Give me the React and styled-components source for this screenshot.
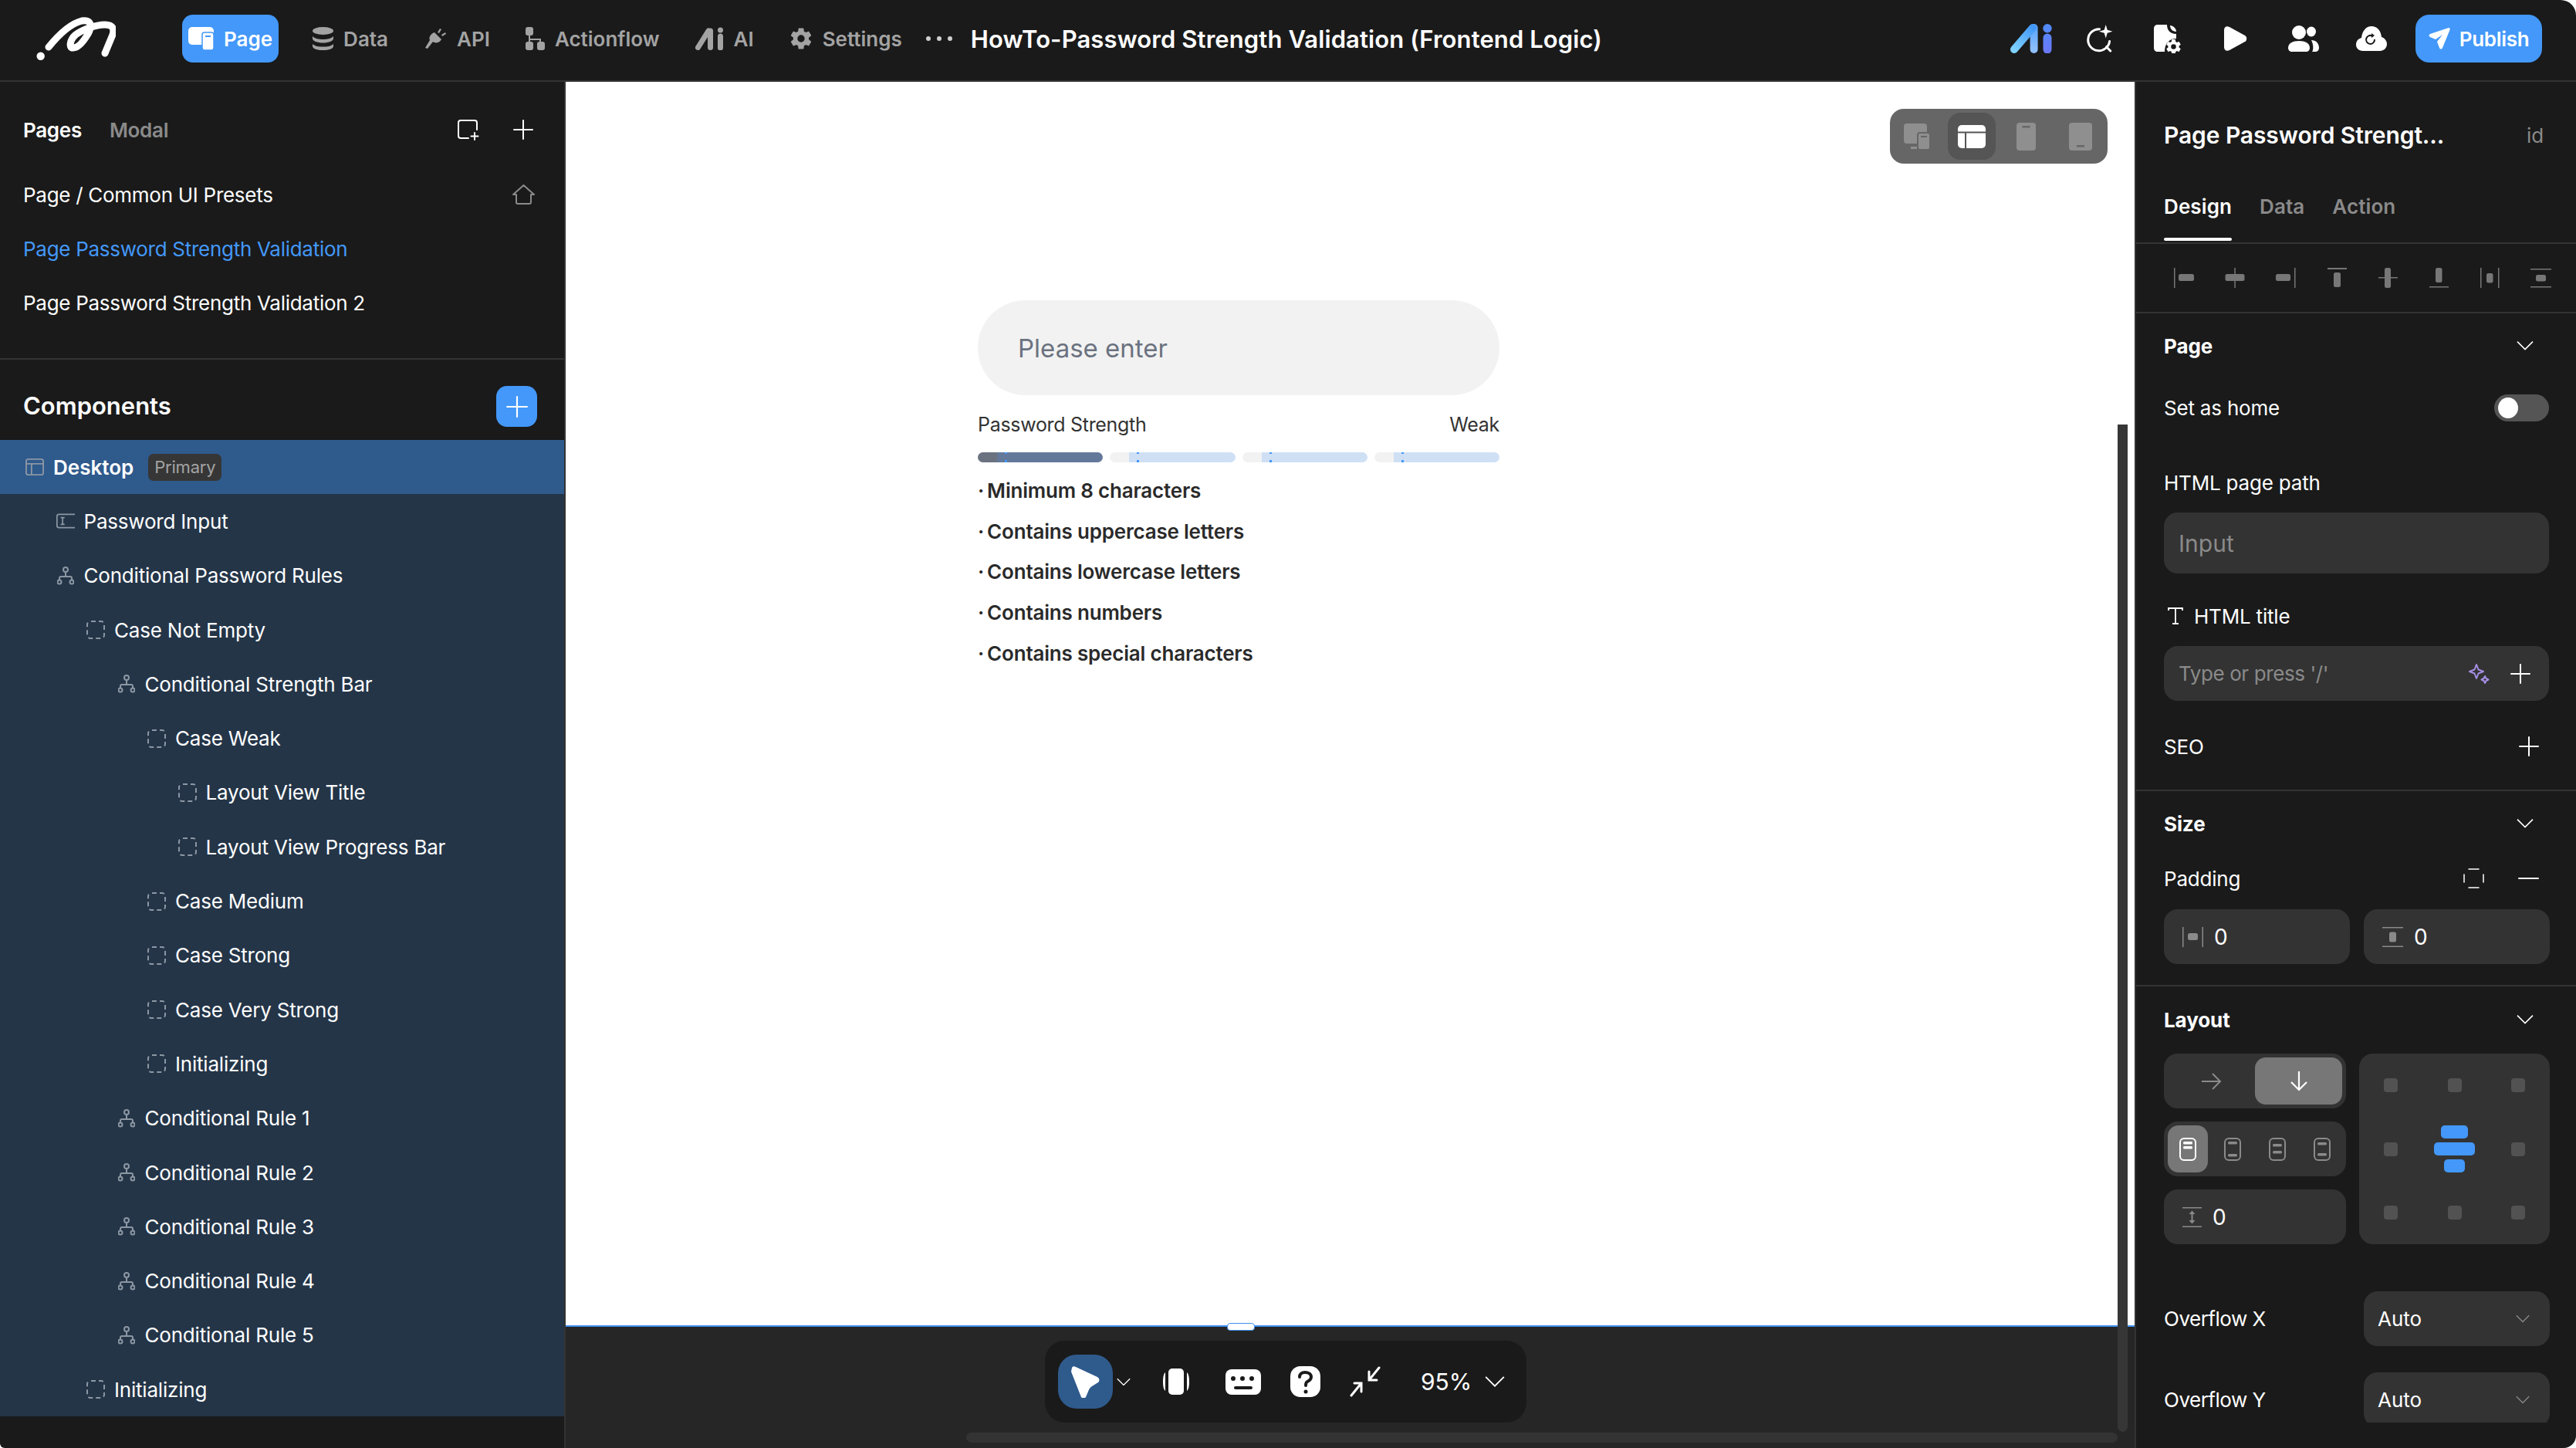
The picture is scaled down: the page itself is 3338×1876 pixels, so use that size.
import React from 'react'
import styled, { createGlobalStyle } from 'styled-components'
import { IoSettingsSharp } from 'react-icons/io5'

const FONT = `Inter, "Noto Sans", "Liberation Sans", sans-serif`

const GlobalStyle = createGlobalStyle`
  html, body { margin: 0; padding: 0; background: #fff; }
  * { box-sizing: border-box; }
  body { font-family: ${FONT}; -webkit-font-smoothing: antialiased; }
`

const Shell = styled.div`
  width: 3338px;
  height: 1876px;
  display: flex;
  flex-direction: column;
  overflow: hidden;
  background: #1a1a1a;
  color: #fff;
  border-radius: 0 20px 16px 6px;
`

/* ---------- header ---------- */
const Header = styled.header`
  height: 106px;
  flex: none;
  display: flex;
  align-items: center;
  padding: 0 44px 4px 45px;
  border-bottom: 2px solid #333;
`
const LogoBox = styled.div`
  width: 120px;
  height: 80px;
  margin-left: -15px;
  flex: none;
`
const Nav = styled.nav`
  display: flex;
  align-items: center;
  gap: 24px;
  margin-left: 86px;
`
const NavItem = styled.div`
  height: 62px;
  display: flex;
  align-items: center;
  gap: 13px;
  padding: 0 ${p => (p.$active ? 8 : 11)}px;
  margin-right: ${p => (p.$active ? 9 : 0)}px;
  border-radius: 14px;
  font-size: 26px;
  font-weight: 600;
  color: ${p => (p.$active ? '#fff' : '#a3a3a3')};
  background: ${p => (p.$active ? '#4398f9' : 'transparent')};
`
const Dots = styled.div`
  display: flex;
  gap: 8px;
  margin-left: 20px;
  span { width: 6px; height: 6px; border-radius: 50%; background: #cfcfcf; }
`
const PageTitle = styled.h1`
  margin: 0 0 0 24px;
  font-size: 31px;
  font-weight: 600;
  letter-spacing: 0.1px;
  white-space: nowrap;
`
const HeaderRight = styled.div`
  margin-left: auto;
  display: flex;
  align-items: center;
`
const IconSlot = styled.div`
  width: 88px;
  display: flex;
  justify-content: center;
`
const PublishButton = styled.button`
  width: 164px;
  height: 62px;
  margin-left: 13px;
  border: 0;
  border-radius: 18px;
  background: #4398f9;
  color: #fff;
  font: 600 26px ${FONT};
  letter-spacing: -0.3px;
  display: flex;
  align-items: center;
  justify-content: center;
  gap: 12px;
`

/* ---------- main columns ---------- */
const Main = styled.div`
  flex: 1;
  min-height: 0;
  display: flex;
`

/* ---------- left panel ---------- */
const LeftPanel = styled.aside`
  width: 733px;
  flex: none;
  border-right: 2px solid #333;
`
const PagesHead = styled.div`
  height: 62px;
  margin-top: 31px;
  padding: 0 40px 0 30px;
  display: flex;
  align-items: center;
  gap: 36px;
`
const PagesTab = styled.span`
  font-size: 26px;
  font-weight: 600;
  letter-spacing: -0.3px;
  color: ${p => (p.$active ? '#fff' : '#8a8a8a')};
`
const PagesTools = styled.div`
  margin-left: auto;
  display: flex;
  align-items: center;
  gap: 44px;
`
const PageList = styled.div`
  margin-top: 18px;
  padding-bottom: 37px;
  border-bottom: 2px solid #333;
`
const PageRow = styled.div`
  height: 70px;
  padding: 0 38px 0 30px;
  display: flex;
  align-items: center;
  justify-content: space-between;
  font-size: 26px;
  letter-spacing: -0.28px;
  color: ${p => (p.$active ? '#4398f9' : '#fff')};
`
const ComponentsHead = styled.div`
  height: 104px;
  padding: 34px 35px 17px 30px;
  display: flex;
  align-items: center;
  justify-content: space-between;
  h2 { margin: 0 0 3px; font-size: 31px; font-weight: 600; }
`
const AddButton = styled.div`
  width: 53px;
  height: 53px;
  border-radius: 14px;
  background: #4398f9;
  display: flex;
  align-items: center;
  justify-content: center;
`
const Tree = styled.div`
  background: #243548;
`
const TreeRow = styled.div`
  height: 70.3px;
  display: flex;
  align-items: center;
  gap: 12px;
  padding-left: ${p => 33 + p.$depth * 39.5}px;
  font-size: 26px;
  letter-spacing: ${p => (p.$selected ? '0' : '-0.2px')};
  font-weight: ${p => (p.$selected ? 600 : 400)};
  background: ${p => (p.$selected ? '#2f5a8c' : 'transparent')};
`
const TreeIcon = styled.span`
  width: 24px;
  height: 28px;
  flex: none;
  display: flex;
  align-items: center;
  justify-content: center;
`
const Badge = styled.span`
  height: 35px;
  margin-left: 7px;
  padding: 0 8px;
  display: flex;
  align-items: center;
  border-radius: 7px;
  background: #363636;
  color: #a3a3a3;
  font-size: 22px;
  font-weight: 400;
  letter-spacing: -0.2px;
`

/* ---------- canvas ---------- */
const Center = styled.section`
  flex: 1;
  min-width: 0;
  display: flex;
  flex-direction: column;
  position: relative;
  background: #262626;
`
const Canvas = styled.div`
  height: 1611px;
  flex: none;
  background: #fff;
  padding: 283px 0 0 534px;
  position: relative;
`
const DeviceBar = styled.div`
  position: absolute;
  top: 35px;
  right: 35px;
  width: 282px;
  height: 71px;
  padding: 5px 0;
  border-radius: 18px;
  background: #666;
  display: grid;
  grid-template-columns: repeat(4, 1fr);
`
const DeviceCell = styled.div`
  margin: 0 4px;
  border-radius: 16px;
  display: flex;
  align-items: center;
  justify-content: center;
  background: ${p => (p.$active ? '#555' : 'transparent')};
`
const Form = styled.div`
  width: 676px;
`
const PasswordInput = styled.div`
  height: 123px;
  padding-left: 52px;
  border-radius: 62px;
  background: #f2f2f2;
  display: flex;
  align-items: center;
  font-size: 33px;
  color: #6b7280;
`
const StrengthHead = styled.div`
  margin-top: 21px;
  height: 34px;
  display: flex;
  align-items: center;
  justify-content: space-between;
  font-size: 25px;
  letter-spacing: -0.3px;
  color: #333;
`
const Bars = styled.div`
  margin-top: 19px;
  display: grid;
  grid-template-columns: repeat(4, 1fr);
  gap: 9px;
`
const Bar = styled.div`
  height: 13px;
  border-radius: 7px;
  overflow: hidden;
  position: relative;
  display: flex;
  &::before {
    content: '';
    width: 25px;
    background: ${p => (p.$on ? '#6b7280' : '#f2f2f2')};
  }
  &::after {
    content: '';
    flex: 1;
    background: ${p => (p.$on ? '#64799a' : '#cfe0f5')};
  }
`
const Tick = styled.i`
  position: absolute;
  z-index: 1;
  left: 35px;
  top: 0;
  width: 3px;
  height: 13px;
  background: linear-gradient(#4398f9 0 2px, transparent 2px 10px, #4398f9 10px);
`
const RuleList = styled.ul`
  list-style: none;
  margin: 10px 0 0;
  padding: 0;
`
const Rule = styled.li`
  height: 52.7px;
  display: flex;
  align-items: center;
  gap: 4px;
  font-size: 26px;
  font-weight: 600;
  letter-spacing: -0.2px;
  color: #2a2a2a;
`
const VScroll = styled.div`
  position: absolute;
  right: 9px;
  top: 444px;
  bottom: 21px;
  width: 13px;
  border-radius: 0 0 7px 7px;
  background: #363636;
  z-index: 1;
`
const HScroll = styled.div`
  position: absolute;
  left: 519px;
  right: 22px;
  bottom: 7px;
  height: 13px;
  border-radius: 7px;
  background: #333;
`
const BlueLine = styled.div`
  height: 2px;
  flex: none;
  background: #3f8fef;
  position: relative;
  &::after {
    content: '';
    position: absolute;
    left: 857px;
    top: -3px;
    width: 34px;
    height: 8px;
    border-radius: 4px;
    background: #fff;
    border: 1.5px solid #3f8fef;
  }
`
const ToolBar = styled.div`
  width: 624px;
  height: 106px;
  margin: 18px 0 0 621px;
  padding: 18px 0 18px 17px;
  border-radius: 26px;
  background: #1a1a1a;
  display: flex;
  align-items: center;
  position: relative;
  &::before {
    content: '';
    position: absolute;
    left: 198px;
    top: -2px;
    width: 106px;
    height: 4px;
    border-radius: 4px 4px 0 0;
    background: #3f8fef;
    z-index: -1;
  }
`
const ToolActive = styled.div`
  width: 71px;
  height: 70px;
  flex: none;
  border-radius: 24px;
  background: #2f5a8c;
  display: flex;
  align-items: center;
  justify-content: center;
`
const ToolSlot = styled.div`
  width: ${p => p.$w}px;
  display: flex;
  justify-content: center;
  flex: none;
`
const Zoom = styled.span`
  font-size: 30px;
  margin-left: 41px;
  margin-right: 17px;
`

/* ---------- right panel ---------- */
const RightPanel = styled.aside`
  width: 572px;
  flex: none;
  border-left: 2px solid #333;
  display: flex;
  flex-direction: column;
`
const Scroller = styled.div`
  height: 1737px;
  overflow: hidden;
`
const TitleRow = styled.div`
  height: 138px;
  padding: 0 42px 0 36px;
  display: flex;
  align-items: center;
  justify-content: space-between;
  font-size: 30px;
  font-weight: 600;
  letter-spacing: -0.1px;
  small { font-size: 26px; font-weight: 400; color: #8a8a8a; }
`
const Tabs = styled.div`
  height: 72px;
  padding: 0 36px;
  display: flex;
  gap: 36px;
  border-bottom: 2px solid #333;
`
const Tab = styled.div`
  height: 70px;
  padding-top: 8px;
  font-size: 26px;
  font-weight: 600;
  letter-spacing: 0.1px;
  color: ${p => (p.$active ? '#fff' : '#8a8a8a')};
  position: relative;
  &::after {
    content: '';
    display: ${p => (p.$active ? 'block' : 'none')};
    position: absolute;
    left: 0;
    right: 0;
    bottom: 2px;
    height: 4px;
    border-radius: 2px;
    background: #fff;
  }
`
const AlignBar = styled.div`
  height: 90px;
  padding: 0 30px 0 46px;
  display: flex;
  align-items: center;
  justify-content: space-between;
  border-bottom: 2px solid #333;
`
const Section = styled.div`
  padding: 0 35px 0 36px;
  border-bottom: ${p => (p.$last ? '0' : '2px solid #333')};
  padding-bottom: ${p => p.$pb || 0}px;
`
const SectionHead = styled.div`
  height: ${p => p.$h || 84}px;
  padding-right: 20px;
  display: flex;
  align-items: center;
  justify-content: space-between;
  font-size: 26px;
  font-weight: 700;
  letter-spacing: -0.1px;
`
const Row = styled.div`
  height: ${p => p.$h}px;
  margin-top: ${p => p.$mt || 0}px;
  padding-right: ${p => p.$pr || 0}px;
  display: flex;
  align-items: center;
  justify-content: space-between;
  font-size: 26px;
  letter-spacing: -0.2px;
`
const Label = styled.span`
  display: flex;
  align-items: center;
  gap: 14px;
  padding-left: 5px;
`
const Field = styled.div`
  height: ${p => p.$h || 71}px;
  margin-top: ${p => p.$mt || 0}px;
  padding: 0 ${p => p.$pr || 24}px 0 ${p => p.$pl || 19}px;
  border-radius: 18px;
  background: #333;
  display: flex;
  align-items: center;
  justify-content: ${p => (p.$between ? 'space-between' : 'flex-start')};
  gap: ${p => (p.$between ? 0 : 14)}px;
  font-size: ${p => p.$fs || 26}px;
  letter-spacing: ${p => (p.$tight ? '-0.4px' : '0')};
  color: ${p => (p.$dim ? '#8a8a8a' : '#fff')};
`
const FieldTools = styled.div`
  display: flex;
  align-items: center;
  gap: ${p => p.$gap || 27}px;
`
const TwoCols = styled.div`
  margin-top: 11px;
  display: grid;
  grid-template-columns: 241px 241px;
  gap: 18px;
`
const LayoutGrid = styled.div`
  margin-top: 1px;
  display: grid;
  grid-template-columns: 236px 247px;
  gap: 17px;
`
const LeftStack = styled.div`
  display: flex;
  flex-direction: column;
  gap: 17px;
`
const Segmented = styled.div`
  height: 71px;
  padding: 5px;
  border-radius: 18px;
  background: #333;
  display: grid;
  grid-template-columns: repeat(${p => p.$n}, ${p => (p.$n === 4 ? '58px' : '1fr')});
`
const SegCell = styled.div`
  width: ${p => p.$w || 'auto'};
  border-radius: 14px;
  display: flex;
  align-items: center;
  justify-content: center;
  background: ${p => (p.$active ? '#777' : 'transparent')};
`
const AlignPad = styled.div`
  height: 247px;
  padding: 32px 32px;
  border-radius: 18px;
  background: #333;
  display: grid;
  grid-template-columns: 18px 1fr 18px;
  grid-template-rows: 18px 1fr 18px;
  align-items: center;
  justify-items: center;
`
const PadDot = styled.span`
  width: 18px;
  height: 18px;
  border-radius: 4px;
  background: #525252;
`
const PadCenter = styled.div`
  display: flex;
  flex-direction: column;
  align-items: center;
  gap: 5px;
`
const PadBar = styled.span`
  width: ${p => p.$w}px;
  height: 17px;
  border-radius: 5px;
  background: #4398f9;
`
const SelectRow = styled.div`
  margin-top: ${p => p.$mt}px;
  display: grid;
  grid-template-columns: 259px 241px;
  align-items: center;
  font-size: 26px;
  letter-spacing: -0.5px;
`
const ToggleTrack = styled.div`
  width: 71px;
  height: 35px;
  padding: 4px 5px;
  border-radius: 18px;
  background: #555;
  span { display: block; width: 26px; height: 27px; border-radius: 50%; background: #fff; }
`
const MinusLine = styled.span`
  display: block;
  width: 27px;
  height: 2px;
  border-radius: 1px;
  background: #fff;
`

/* ---------- icons ---------- */
const Chevron = ({ size = 22, color = '#fff' }) => (
  <svg width={size} height={size * 0.6} viewBox="0 0 22 13" fill="none" stroke={color} strokeWidth="1.6">
    <path d="M1 1.5l10 10 10-10" />
  </svg>
)
const Plus = ({ size = 26, color = '#fff' }) => (
  <svg width={size} height={size} viewBox="0 0 26 26" stroke={color} strokeWidth="2" strokeLinecap="round">
    <path d="M13 1v24M1 13h24" />
  </svg>
)
const Logo = () => (
  <svg width="120" height="80" viewBox="0 0 120 80" fill="none">
    <circle cx="22.7" cy="62.7" r="5.2" fill="#fff" />
    <path
      d="M33 51C46 35 60 21 76 17c12-2 14 6 8 17-6 10-13 18-19 18-6 1-5-10 3-17 8-6 25-13 38-13 11 0 12 6 10 13l-10 24"
      stroke="#fff"
      strokeWidth="9"
      strokeLinecap="round"
    />
  </svg>
)
const PageNavIcon = () => (
  <svg width="33" height="30" viewBox="0 0 33 30">
    <rect x="0" y="0" width="33" height="23" rx="5" fill="#fff" />
    <rect x="18" y="7" width="15" height="23" rx="3" fill="#fff" stroke="#4398f9" strokeWidth="1.5" />
    <rect x="22" y="11" width="7" height="2" fill="#4398f9" />
  </svg>
)
const DataIcon = () => (
  <svg width="27" height="30" viewBox="0 0 27 30" fill="#a3a3a3">
    <ellipse cx="13.5" cy="5" rx="13.5" ry="5" />
    <path d="M0 12c3 3 8 4 13.5 4S24 15 27 12v3c0 3-6 5.500-13.500 5.500S0 18 0 15zM0 22c3 3 8 3.500 13.500 3.500S24 25 27 22v3c0 3-6 5-13.500 5S0 28 0 25z" />
  </svg>
)
const ApiIcon = () => (
  <svg width="30" height="30" viewBox="0 0 30 30" fill="#a3a3a3">
    <path d="M14 7l9 9c-2 4-7 6-11 3l-7 9-3-1 6-10c-2-4 2-9 6-10z" />
    <path d="M21 2l2 1-3 5-2-1zM28 7l1 2-5 3-1-2z" />
  </svg>
)
const FlowIcon = () => (
  <svg width="25" height="30" viewBox="0 0 25 30" fill="#a3a3a3">
    <rect x="0" y="0" width="10" height="11" rx="3" />
    <rect x="0" y="19" width="10" height="11" rx="3" />
    <rect x="15" y="19" width="10" height="11" rx="3" />
    <path d="M4 10h2v5h14v5h-2v-3H6v3H4z" />
  </svg>
)
const NavAi = () => (
  <svg width="37" height="30" viewBox="0 0 37 30" fill="none" stroke="#a3a3a3" strokeLinecap="round">
    <path d="M3.500 26.500L17 5" strokeWidth="7" />
    <path d="M19.500 5v21.500" strokeWidth="7" />
    <circle cx="32.500" cy="4" r="3.500" fill="#a3a3a3" stroke="none" />
    <path d="M32.500 12v15" strokeWidth="7" />
  </svg>
)
const BrandAi = () => (
  <svg width="56" height="38" viewBox="0 0 56 38" fill="none" strokeLinecap="round">
    <defs>
      <linearGradient id="aiA" gradientUnits="userSpaceOnUse" x1="4" y1="34" x2="29" y2="4">
        <stop offset="0" stopColor="#7fd3ff" />
        <stop offset="1" stopColor="#4398f9" />
      </linearGradient>
      <linearGradient id="aiB" gradientUnits="userSpaceOnUse" x1="30" y1="4" x2="30" y2="34">
        <stop offset="0" stopColor="#5aa5fb" />
        <stop offset="1" stopColor="#8fc0ff" />
      </linearGradient>
      <linearGradient id="aiC" gradientUnits="userSpaceOnUse" x1="48" y1="0" x2="48" y2="36">
        <stop offset="0" stopColor="#4f8cf8" />
        <stop offset="1" stopColor="#6a78fa" />
      </linearGradient>
    </defs>
    <path d="M30.600 5v28" stroke="url(#aiB)" strokeWidth="10" />
    <path d="M5 33L29 5" stroke="url(#aiA)" strokeWidth="10" />
    <circle cx="48" cy="5.700" r="5.700" fill="url(#aiC)" />
    <path d="M48 18v15" stroke="url(#aiC)" strokeWidth="11" />
  </svg>
)
const SearchSpark = () => (
  <svg width="36" height="36" viewBox="0 0 36 36" fill="none">
    <path d="M17.500 5.700A14 14 0 1 0 30.600 21.500" stroke="#fff" strokeWidth="3" strokeLinecap="round" />
    <path d="M26.700 28.700l5 5.300" stroke="#fff" strokeWidth="3" strokeLinecap="round" />
    <path d="M25.700 0l2 6.700 6.700 2-6.700 2-2 6.700-2-6.700-6.700-2 6.700-2z" fill="#fff" />
  </svg>
)
const FileGear = () => (
  <svg width="36" height="37" viewBox="0 0 36 37" fill="#fff">
    <path d="M5 0h12c0 8 5 12 12 12v6c-9 0-15 6-15 17H5c-3 0-5-2-5-5V5c0-3 2-5 5-5z" />
    <path d="M21 1c0 5 4 8 8 8 0-4-4-8-8-8z" />
    <IoSettingsSharp x="15" y="18" size={21} color="#fff" />
  </svg>
)
const Play = () => (
  <svg width="30" height="32" viewBox="0 0 30 32">
    <path d="M0 5C0 1 3-1 7 1l20 11c3 2 3 6 0 8L7 31c-4 2-7 0-7-4z" fill="#fff" />
  </svg>
)
const Users = () => (
  <svg width="40" height="34" viewBox="0 0 40 34" fill="#fff">
    <circle cx="14" cy="9" r="9" />
    <path d="M0 29c0-6 6-9 14-9s14 3 14 9c0 3-2 5-5 5H5c-3 0-5-2-5-5z" />
    <ellipse cx="30" cy="8" rx="6" ry="6.500" />
    <path d="M30 19c6 0 10 4 10 10 0 3-2 5-5 5h-4c2-2 2-9-1-15z" />
  </svg>
)
const CloudSync = () => (
  <svg width="40" height="32" viewBox="0 0 40 32">
    <path d="M9 32C3 32 0 28 0 24c0-5 3-8 7-9C8 6 13 0 20 0s12 5 13 14c4 1 7 5 7 9 0 5-4 9-9 9z" fill="#fff" />
    <path d="M24 17a5.500 5.500 0 1 1-3-4.500" stroke="#1a1a1a" strokeWidth="2" fill="none" />
    <path d="M20 9l4 3-4 3z" fill="#1a1a1a" />
  </svg>
)
const PlaneIcon = () => (
  <svg width="28" height="28" viewBox="0 0 28 28" fill="#fff">
    <path d="M26 0c2 0 2 2 1 4l-9 22c-1 2-3 2-4 0l-3-8 7-9-9 6-7-3c-2-1-2-3 0-4z" />
  </svg>
)
const FolderPlus = () => (
  <svg width="28" height="27" viewBox="0 0 28 27" fill="none" stroke="#fff" strokeWidth="2" strokeLinecap="round">
    <path d="M14 24H4c-2 0-3-1-3-3V4c0-2 1-3 3-3h18c2 0 3 1 3 3v9" />
    <path d="M22 17v9M17.500 21.500h9" />
  </svg>
)
const HomeIcon = () => (
  <svg width="29" height="26" viewBox="0 0 29 26" fill="none" stroke="#8a8a8a" strokeWidth="2" strokeLinejoin="round">
    <path d="M14.500 1L28 13h-4v10c0 1-1 2-2 2H7c-1 0-2-1-2-2V13H1z" />
  </svg>
)
const FrameIcon = () => (
  <svg width="26" height="24" viewBox="0 0 26 24" fill="none" stroke="#8c97a3" strokeWidth="2">
    <rect x="1" y="1" width="24" height="22" rx="3" />
    <path d="M1 7.500h24M8.500 7.500V23" />
  </svg>
)
const InputIcon = () => (
  <svg width="28" height="22" viewBox="0 0 28 22" fill="none" stroke="#8c97a3" strokeWidth="2">
    <path d="M28 1H4C2 1 1 2 1 4v14c0 2 1 3 3 3h24" />
    <path d="M6.500 6h6M9.500 6v10M6.500 16h6" />
  </svg>
)
const BranchIcon = () => (
  <svg width="22" height="24" viewBox="0 0 22 24" fill="none" stroke="#8c97a3" strokeWidth="2">
    <circle cx="11" cy="4" r="3" />
    <circle cx="3" cy="20" r="2.500" />
    <circle cx="19" cy="20" r="2.500" />
    <path d="M11 7v6M3 17.500V15c0-1 1-2 2-2h12c1 0 2 1 2 2v2.500" />
  </svg>
)
const DashedIcon = () => (
  <svg width="24" height="24" viewBox="0 0 24 24" fill="none" stroke="#8c97a3" strokeWidth="2">
    <rect x="1" y="1" width="22" height="22" rx="4" strokeDasharray="6 4" strokeDashoffset="9" />
  </svg>
)
const Align = ({ children }) => (
  <svg width="32" height="28" viewBox="0 0 32 28" fill="#777" stroke="none">
    {children}
  </svg>
)
const alignIcons = [
  <><rect x="3" y="1" width="1.500" height="26" /><rect x="9" y="9" width="20" height="9" rx="2.500" /></>,
  <><rect x="15.300" y="1" width="1.500" height="26" /><rect x="3.500" y="9" width="25" height="9" rx="2.500" /></>,
  <><rect x="27" y="1" width="1.500" height="26" /><rect x="3" y="9" width="19" height="9" rx="2.500" /></>,
  <><rect x="4" y="1" width="25" height="2" /><rect x="12" y="7" width="9" height="19" rx="2.500" /></>,
  <><rect x="4" y="13" width="25" height="1.500" /><rect x="12" y="1" width="8" height="26" rx="2.500" /></>,
  <><rect x="4" y="25" width="25" height="1.500" /><rect x="12" y="1" width="8.500" height="19" rx="2.500" /></>,
  <><rect x="4" y="1" width="1.500" height="26" /><rect x="27" y="1" width="1.500" height="26" /><rect x="12" y="8" width="8.500" height="12.500" rx="2.500" /></>,
  <><rect x="3" y="2" width="27" height="1.500" /><rect x="3" y="25" width="27" height="1.500" /><rect x="10" y="10" width="13" height="8.500" rx="2.500" /></>,
]
const PadXIcon = () => (
  <svg width="27" height="26" viewBox="0 0 27 26" fill="#8a8a8a">
    <rect x="0" y="0" width="1.500" height="26" />
    <rect x="25.500" y="0" width="1.500" height="26" />
    <rect x="7" y="8" width="13" height="9" rx="2.500" />
  </svg>
)
const PadYIcon = () => (
  <svg width="27" height="26" viewBox="0 0 27 26" fill="#8a8a8a">
    <rect x="0" y="0" width="27" height="1.500" />
    <rect x="0" y="24.500" width="27" height="1.500" />
    <rect x="9" y="6.500" width="9" height="13" rx="2.500" />
  </svg>
)
const GapIcon = () => (
  <svg width="25" height="26" viewBox="0 0 25 26" fill="#8a8a8a" stroke="none">
    <rect x="0" y="0" width="25" height="1.500" />
    <rect x="0" y="24.500" width="25" height="1.500" />
    <rect x="11.500" y="7" width="2" height="12" />
    <path d="M12.500 4.500l4 4.500h-8zM12.500 21.500l4-4.500h-8z" />
  </svg>
)
const PaddingBox = () => (
  <svg width="27" height="26" viewBox="0 0 27 26" stroke="#fff" strokeWidth="1.500" strokeLinecap="round" fill="none">
    <path d="M7 1h13M7 25h13M1 8v10M26 8v10" />
  </svg>
)
const Sparkle = () => (
  <svg width="28" height="28" viewBox="0 0 28 28" fill="none" stroke="#a68fe6" strokeWidth="2" strokeLinejoin="round">
    <path d="M11 2l2.500 6.500L20 11l-6.500 2.500L11 20l-2.500-6.500L2 11l6.500-2.500z" />
    <path d="M22 17l1.500 3 3 1.500-3 1.500-1.500 3-1.500-3-3-1.500 3-1.500z" />
  </svg>
)
const TextT = () => (
  <svg width="20" height="22" viewBox="0 0 20 22" fill="none" stroke="#fff" strokeWidth="1.800">
    <path d="M1 4V1h18v3M10 1v20M6 21h8" />
  </svg>
)
const ArrowRight = () => (
  <svg width="26" height="24" viewBox="0 0 26 24" fill="none" stroke="#8a8a8a" strokeWidth="2">
    <path d="M0 12h24M14 2l10 10-10 10" />
  </svg>
)
const ArrowDown = () => (
  <svg width="24" height="26" viewBox="0 0 24 26" fill="none" stroke="#fff" strokeWidth="2.200">
    <path d="M12 0v24M2 14l10 10 10-10" />
  </svg>
)
const Distribute = ({ bars, color }) => (
  <svg width="22" height="30" viewBox="0 0 22 30" fill="none">
    <rect x="1" y="1" width="20" height="28" rx="5" stroke={color} strokeWidth="2" />
    {bars.map(y => <rect key={y} x="5" y={y} width="12" height="3.500" rx="1.500" fill={color} />)}
  </svg>
)
const DeviceAll = () => (
  <svg width="34" height="34" viewBox="0 0 34 34" fill="#8f8f8f">
    <rect x="0" y="0" width="30" height="26" rx="4" />
    <rect x="18" y="12" width="16" height="22" rx="3" stroke="#666" strokeWidth="2" />
    <rect x="9" y="30" width="8" height="3" />
    <rect x="22" y="16" width="8" height="2" fill="#666" />
  </svg>
)
const DeviceWeb = () => (
  <svg width="36" height="30" viewBox="0 0 36 30">
    <rect x="0" y="0" width="36" height="30" rx="5" fill="#fff" />
    <path d="M0 9.500h36M10 9.500V30" stroke="#555" strokeWidth="2" />
  </svg>
)
const DevicePhone = ({ bottom, w }) => (
  <svg width={w} height="36" viewBox={`0 0 ${w} 36`}>
    <rect x="0" y="0" width={w} height="36" rx="4" fill="#8f8f8f" />
    <rect x={w / 2 - 5} y={bottom ? 29 : 4} width="10" height="2.500" fill="#666" />
  </svg>
)
const Cursor = () => (
  <svg width="42" height="42" viewBox="0 0 42 42">
    <path d="M3 3c1-2 3-2 5-1l28 13c3 2 3 5 1 7l-8 5c-3 2-4 4-5 7l-3 7c-1 2-5 2-6 0L2 8z" fill="#fff" />
  </svg>
)
const PhoneLike = () => (
  <svg width="34" height="34" viewBox="0 0 34 34" fill="#fff">
    <rect x="7" y="0" width="20" height="34" rx="5" />
    <path d="M3 5C1 7 0 10 0 17s1 10 3 12zM31 5c2 2 3 5 3 12s-1 10-3 12z" />
  </svg>
)
const Keyboard = () => (
  <svg width="46" height="33" viewBox="0 0 46 33">
    <rect x="0" y="0" width="46" height="33" rx="8" fill="#fff" />
    <circle cx="10" cy="12" r="3" fill="#1a1a1a" />
    <circle cx="22" cy="12" r="3" fill="#1a1a1a" />
    <circle cx="34" cy="12" r="3" fill="#1a1a1a" />
    <rect x="11" y="22" width="24" height="4" rx="2" fill="#1a1a1a" />
  </svg>
)
const Help = () => (
  <svg width="39" height="40" viewBox="0 0 39 40">
    <rect x="0" y="0" width="39" height="40" rx="13" fill="#fff" />
    <path d="M12 14c0-4 3-6 7-6s8 2 8 6-3 5-5 6-2 3-2 5" stroke="#1a1a1a" strokeWidth="4" fill="none" strokeLinecap="round" />
    <circle cx="20" cy="33" r="2.500" fill="#1a1a1a" />
  </svg>
)
const Collapse = () => (
  <svg width="40" height="40" viewBox="0 0 40 40" fill="none" stroke="#fff" strokeWidth="3" strokeLinecap="round">
    <path d="M38 2L25 18M25 7v11h10M2 38l13-16M15 33V22H6" />
  </svg>
)

const treeRows = [
  { d: 0, t: 'Desktop', i: 'frame', selected: true, badge: 'Primary' },
  { d: 1, t: 'Password Input', i: 'input' },
  { d: 1, t: 'Conditional Password Rules', i: 'branch' },
  { d: 2, t: 'Case Not Empty', i: 'dash' },
  { d: 3, t: 'Conditional Strength Bar', i: 'branch' },
  { d: 4, t: 'Case Weak', i: 'dash' },
  { d: 5, t: 'Layout View Title', i: 'dash' },
  { d: 5, t: 'Layout View Progress Bar', i: 'dash' },
  { d: 4, t: 'Case Medium', i: 'dash' },
  { d: 4, t: 'Case Strong', i: 'dash' },
  { d: 4, t: 'Case Very Strong', i: 'dash' },
  { d: 4, t: 'Initializing', i: 'dash' },
  { d: 3, t: 'Conditional Rule 1', i: 'branch' },
  { d: 3, t: 'Conditional Rule 2', i: 'branch' },
  { d: 3, t: 'Conditional Rule 3', i: 'branch' },
  { d: 3, t: 'Conditional Rule 4', i: 'branch' },
  { d: 3, t: 'Conditional Rule 5', i: 'branch' },
  { d: 2, t: 'Initializing', i: 'dash' },
]
const treeIcons = { frame: <FrameIcon />, input: <InputIcon />, branch: <BranchIcon />, dash: <DashedIcon /> }

const rules = [
  'Minimum 8 characters',
  'Contains uppercase letters',
  'Contains lowercase letters',
  'Contains numbers',
  'Contains special characters',
]

export default function App() {
  return (
    <>
      <GlobalStyle />
      <Shell>
        <Header>
          <LogoBox><Logo /></LogoBox>
          <Nav>
            <NavItem $active><PageNavIcon />Page</NavItem>
            <NavItem><DataIcon />Data</NavItem>
            <NavItem><ApiIcon />API</NavItem>
            <NavItem><FlowIcon />Actionflow</NavItem>
            <NavItem><NavAi />AI</NavItem>
            <NavItem><IoSettingsSharp size={30} />Settings</NavItem>
          </Nav>
          <Dots><span /><span /><span /></Dots>
          <PageTitle>HowTo-Password Strength Validation (Frontend Logic)</PageTitle>
          <HeaderRight>
            <IconSlot><BrandAi /></IconSlot>
            <IconSlot><SearchSpark /></IconSlot>
            <IconSlot><FileGear /></IconSlot>
            <IconSlot><Play /></IconSlot>
            <IconSlot><Users /></IconSlot>
            <IconSlot><CloudSync /></IconSlot>
            <PublishButton><PlaneIcon />Publish</PublishButton>
          </HeaderRight>
        </Header>

        <Main>
          <LeftPanel>
            <PagesHead>
              <PagesTab $active>Pages</PagesTab>
              <PagesTab>Modal</PagesTab>
              <PagesTools><FolderPlus /><Plus /></PagesTools>
            </PagesHead>
            <PageList>
              <PageRow>Page / Common UI Presets<HomeIcon /></PageRow>
              <PageRow $active>Page Password Strength Validation</PageRow>
              <PageRow>Page Password Strength Validation 2</PageRow>
            </PageList>
            <ComponentsHead>
              <h2>Components</h2>
              <AddButton><Plus size={28} /></AddButton>
            </ComponentsHead>
            <Tree>
              {treeRows.map((r, i) => (
                <TreeRow key={i} $depth={r.d} $selected={r.selected}>
                  <TreeIcon>{treeIcons[r.i]}</TreeIcon>
                  {r.t}
                  {r.badge && <Badge>{r.badge}</Badge>}
                </TreeRow>
              ))}
            </Tree>
          </LeftPanel>

          <Center>
            <Canvas>
              <DeviceBar>
                <DeviceCell><DeviceAll /></DeviceCell>
                <DeviceCell $active><DeviceWeb /></DeviceCell>
                <DeviceCell><DevicePhone w={25} /></DeviceCell>
                <DeviceCell><DevicePhone w={30} bottom /></DeviceCell>
              </DeviceBar>
              <Form>
                <PasswordInput>Please enter</PasswordInput>
                <StrengthHead><span>Password Strength</span><span>Weak</span></StrengthHead>
                <Bars>
                  <Bar $on><Tick /></Bar>
                  <Bar><Tick /></Bar>
                  <Bar><Tick /></Bar>
                  <Bar><Tick /></Bar>
                </Bars>
                <RuleList>
                  {rules.map(r => <Rule key={r}><span>·</span>{r}</Rule>)}
                </RuleList>
              </Form>
            </Canvas>
            <BlueLine />
            <ToolBar>
              <ToolActive><Cursor /></ToolActive>
              <ToolSlot $w={28}><Chevron size={18} /></ToolSlot>
              <ToolSlot $w={108}><PhoneLike /></ToolSlot>
              <ToolSlot $w={66}><Keyboard /></ToolSlot>
              <ToolSlot $w={94}><Help /></ToolSlot>
              <ToolSlot $w={62}><Collapse /></ToolSlot>
              <Zoom>95%</Zoom>
              <Chevron size={26} />
            </ToolBar>
            <VScroll />
            <HScroll />
          </Center>

          <RightPanel>
            <Scroller>
              <TitleRow>Page Password Strengt...<small>id</small></TitleRow>
              <Tabs>
                <Tab $active>Design</Tab>
                <Tab>Data</Tab>
                <Tab>Action</Tab>
              </Tabs>
              <AlignBar>
                {alignIcons.map((c, i) => <Align key={i}>{c}</Align>)}
              </AlignBar>

              <Section $pb={26}>
                <SectionHead>Page<Chevron /></SectionHead>
                <Row $h={76}>
                  Set as home
                  <ToggleTrack><span /></ToggleTrack>
                </Row>
                <Row $h={50} $mt={34}>HTML page path</Row>
                <Field $h={79} $mt={14} $fs={30} $dim>Input</Field>
                <Row $h={46} $mt={32}><Label><TextT />HTML title</Label></Row>
                <Field $mt={16} $between $dim $tight>
                  Type or press '/'
                  <FieldTools><Sparkle /><Plus /></FieldTools>
                </Field>
                <Row $h={60} $mt={29} $pr={13}>SEO<Plus /></Row>
              </Section>

              <Section $pb={27}>
                <SectionHead>Size<Chevron /></SectionHead>
                <Row $h={58} $pr={13}>
                  Padding
                  <FieldTools $gap={44}>
                    <PaddingBox />
                    <MinusLine />
                  </FieldTools>
                </Row>
                <TwoCols>
                  <Field $pl={24} $fs={28}><PadXIcon />0</Field>
                  <Field $pl={24} $fs={28}><PadYIcon />0</Field>
                </TwoCols>
              </Section>

              <Section $last>
                <SectionHead $h={86}>Layout<Chevron /></SectionHead>
                <LayoutGrid>
                  <LeftStack>
                    <Segmented $n={2}>
                      <SegCell><ArrowRight /></SegCell>
                      <SegCell $active><ArrowDown /></SegCell>
                    </Segmented>
                    <Segmented $n={4}>
                      <SegCell $w="52px" $active><Distribute bars={[5, 11]} color="#fff" /></SegCell>
                      <SegCell $w="52px"><Distribute bars={[5, 21]} color="#8a8a8a" /></SegCell>
                      <SegCell $w="52px"><Distribute bars={[8, 17]} color="#8a8a8a" /></SegCell>
                      <SegCell $w="52px"><Distribute bars={[6, 20]} color="#8a8a8a" /></SegCell>
                    </Segmented>
                    <Field $pl={24} $fs={28}><GapIcon />0</Field>
                  </LeftStack>
                  <AlignPad>
                    <PadDot /><PadDot /><PadDot />
                    <PadDot />
                    <PadCenter><PadBar $w={35} /><PadBar $w={53} /><PadBar $w={27} /></PadCenter>
                    <PadDot />
                    <PadDot /><PadDot /><PadDot />
                  </AlignPad>
                </LayoutGrid>
                <SelectRow $mt={61}>
                  Overflow X
                  <Field $between $pl={18} $pr={26}>Auto<Chevron size={18} color="#8a8a8a" /></Field>
                </SelectRow>
                <SelectRow $mt={34}>
                  Overflow Y
                  <Field $between $pl={18} $pr={26}>Auto<Chevron size={18} color="#8a8a8a" /></Field>
                </SelectRow>
              </Section>
            </Scroller>
          </RightPanel>
        </Main>
      </Shell>
    </>
  )
}
